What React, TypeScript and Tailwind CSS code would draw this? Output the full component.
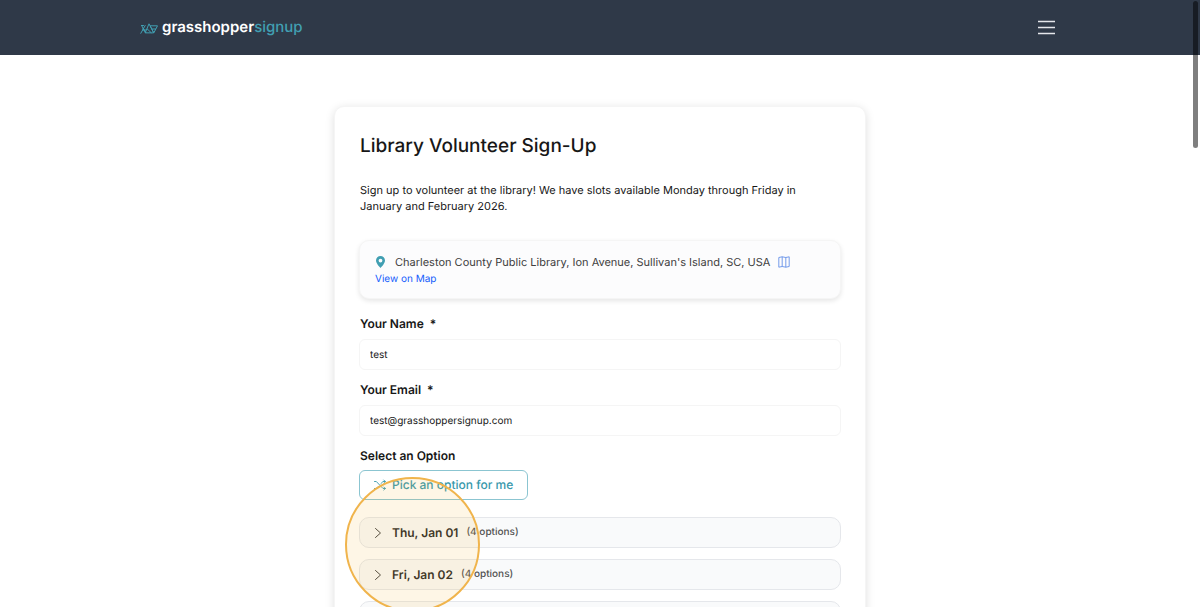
import { useState } from "react";
import type { ReactNode } from "react";

const days = [
  { label: "Thu, Jan 01", count: 4 },
  { label: "Fri, Jan 02", count: 4 },
  { label: "Mon, Jan 05", count: 4 },
];

function Logo() {
  return (
    <a href="#" className="flex items-center gap-1 text-[15px] font-semibold text-white">
      <svg viewBox="0 0 18 12" className="h-3 w-[18px] text-[#419fb2]" fill="none" stroke="currentColor" strokeWidth="1" strokeLinejoin="round" strokeLinecap="round" aria-hidden="true">
        <path d="M.8 11.300 5.200 3.500M1.500 3.500l4.300 7M1.500 3.500h2M2.500 8h3" />
        <path d="M5.300 10.500 9 1.800l4.500 8.700ZM5.300 10.500 2.800 6M7.300 7l3.700 3.500" />
        <path d="M10.500 3.800h7L14 10.500ZM12.300 7h3.200" />
      </svg>
      <span>
        grasshopper<span className="font-medium text-[#419fb2]">signup</span>
      </span>
    </a>
  );
}

function Header() {
  return (
    <header className="flex h-[55px] items-center justify-between bg-[#2f3948] pr-36 pl-[140px]">
      <Logo />
      <button type="button" aria-label="Open menu" className="text-gray-200">
        <svg viewBox="0 0 19 15" className="h-[15px] w-[19px]" fill="none" stroke="currentColor" strokeWidth="1.500" aria-hidden="true">
          <path d="M1 1.500h17M1 7.500h17M1 13.500h17" />
        </svg>
      </button>
    </header>
  );
}

function Location() {
  return (
    <section className="mt-[26px] min-h-[59px] rounded-[10px] border border-neutral-100 bg-[#fcfcfd] px-[15px] pt-3 shadow-[0_2px_5px_rgba(0,0,0,0.1)]">
      <div className="flex min-h-[18px] items-center text-[11px] leading-[18px] text-neutral-700">
        <svg viewBox="0 0 10 12" className="mr-[9px] h-3 w-[11px] shrink-0" aria-hidden="true">
          <path fill="#419fb2" fillRule="evenodd" d="M5 0a4.500 4.500 0 0 0-4.500 4.500C.5 7 3.500 10.500 5 12c1.500-1.500 4.500-5 4.500-7.500A4.500 4.500 0 0 0 5 0Zm0 2.700a1.900 1.900 0 1 1 0 3.800 1.900 1.900 0 0 1 0-3.800Z" />
        </svg>
        <span>Charleston County Public Library, Ion Avenue, Sullivan's Island, SC, USA</span>
        <svg viewBox="0 0 12 12" className="ml-2 h-3 w-3 shrink-0 text-[#5384e6]" fill="none" stroke="currentColor" strokeWidth=".8" strokeLinejoin="round" aria-hidden="true">
          <path d="M.8 1.500 4.200.8l3.600.7 3.400-.7v9.700l-3.400.7-3.600-.7-3.400.7ZM4.200.8v9.700M7.800 1.500v9.700" />
        </svg>
      </div>
      <a href="#map" className="block text-[10px] leading-4 text-blue-600">View on Map</a>
    </section>
  );
}

function Field({ id, type, label, initial }: { id: string; type: string; label: string; initial: string }) {
  const [value, setValue] = useState(initial);
  return (
    <div className="flex flex-col gap-[7px]">
      <label htmlFor={id} className="px-px text-xs leading-4 font-semibold">
        {label}
        <span className="ml-1.5">*</span>
      </label>
      <input
        id={id}
        type={type}
        value={value}
        onChange={(e) => setValue(e.target.value)}
        className="h-[31px] w-full rounded-md border border-neutral-100 bg-white px-2.5 text-[10px] outline-none [text-rendering:geometricPrecision]"
      />
    </div>
  );
}

function DayRow({ children, count }: { children: ReactNode; count: number }) {
  return (
    <button type="button" className="flex h-[31px] w-full items-center rounded-[10px] border border-gray-200 bg-[#f9fafb] px-3.5 text-left text-neutral-700 [text-rendering:geometricPrecision]">
      <svg viewBox="0 0 8 12" className="mr-2.5 h-3 w-2" fill="none" stroke="currentColor" strokeWidth="1" strokeLinecap="round" strokeLinejoin="round" aria-hidden="true">
        <path d="m1.500 1.500 5 4.500-5 4.500" />
      </svg>
      <span className="text-xs font-semibold text-neutral-800">{children}</span>
      <span className="ml-2 text-[10px] font-medium text-neutral-600">({count} options)</span>
    </button>
  );
}

export default function App() {
  return (
    <div className="relative h-screen overflow-hidden bg-white font-['Inter',sans-serif] text-neutral-900 [text-rendering:geometricPrecision]">
      <Header />
      <main className="px-4 pt-[51px]">
        <form className="mx-auto max-w-[532px] rounded-[10px] border border-neutral-100 bg-white p-6 shadow-[0_2px_10px_rgba(0,0,0,0.13)]">
          <h1 className="px-px text-[19px] leading-[30px] font-medium">Library Volunteer Sign-Up</h1>
          <p className="mt-[21px] pr-5 pl-px text-[11px] leading-4">
            Sign up to volunteer at the library! We have slots available Monday through Friday in January and February 2026.
          </p>
          <Location />
          <div className="mt-[17px] flex flex-col gap-3">
            <Field id="name" type="text" label="Your Name" initial="test" />
            <Field id="email" type="email" label="Your Email" initial="test@grasshoppersignup.com" />
            <h2 className="px-px text-xs leading-4 font-semibold">Select an Option</h2>
          </div>
          <button type="button" className="mt-1.5 flex h-[30px] items-center gap-1.5 rounded-md border border-[#8bc5d1] px-3.5 text-xs font-medium text-[#3898ab] [text-rendering:geometricPrecision]">
            <svg viewBox="0 0 12 12" className="h-3 w-3" fill="none" stroke="currentColor" strokeWidth=".9" strokeLinecap="round" strokeLinejoin="round" aria-hidden="true">
              <path d="M.5 2.500h1.800L9 9.500h2.300M.5 9.500h1.800l2-2M6.800 4.700 9 2.500h2.300M9.800 1l1.500 1.500L9.800 4M9.800 8l1.500 1.500L9.800 11" />
            </svg>
            Pick an option for me
          </button>
          <div className="mt-[17px] flex flex-col gap-[11px]">
            {days.map((day) => (
              <DayRow key={day.label} count={day.count}>
                {day.label}
              </DayRow>
            ))}
          </div>
        </form>
      </main>
      <div className="pointer-events-none absolute top-[477px] left-1/2 -ml-[255px] size-[135px] rounded-full border-2 border-[#f0b44c] bg-[#f5b73d]/13" />
      <div className="pointer-events-none absolute top-px right-0.5 h-[147px] w-[5px] rounded-full bg-black/50" />
    </div>
  );
}
